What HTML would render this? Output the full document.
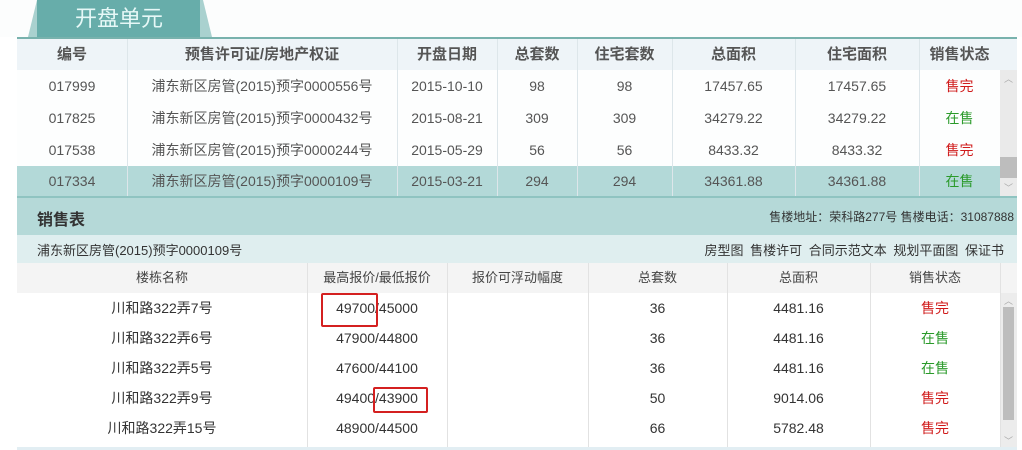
<!DOCTYPE html>
<html><head><meta charset="utf-8"><style>
body{margin:0;width:1022px;height:450px;background:#fff;position:relative;overflow:hidden;font-family:"Liberation Sans","Noto Sans CJK SC",sans-serif;}
.a{position:absolute;}
.c{position:absolute;text-align:center;white-space:nowrap;}
.vl{position:absolute;width:1px;}
</style></head><body>
<div class="a" style="left:0;top:0;width:1022px;height:37px;background:#fcfdfd"></div>
<div class="a" style="left:28px;top:0;width:184px;height:37px;background:#a9d1cf;clip-path:polygon(9px 0,175px 0,184px 37px,0 37px)"></div>
<div class="a" style="left:37px;top:0;width:163px;height:37px;background:#67adaa"></div>
<div class="a" style="left:75px;top:5px;font-size:22px;color:#e6f8f7;line-height:28px">开盘单元</div>
<div class="a" style="left:17px;top:37px;width:1000px;height:2px;background:#78b2ad"></div>
<div class="a" style="left:17px;top:39px;width:1000px;height:31px;background:#eef4f8"></div>
<div class="a" style="left:17px;top:70px;width:983px;height:96px;background:#fdfefe"></div>
<div class="a" style="left:17px;top:166px;width:983px;height:30px;background:#b3d9d8"></div>
<div class="a" style="left:17px;top:196px;width:1000px;height:2px;background:#8fc4c1"></div>
<div id="t1"></div>
<div class="a" style="left:1000px;top:70px;width:17px;height:126px;background:#eaeaea"></div>
<div class="a" style="left:1000px;top:157px;width:17px;height:21px;background:#bdbdbd"></div>
<div class="c" style="left:1000px;top:72px;width:17px;font-size:9px;color:#aaa">︿</div>
<div class="c" style="left:1000px;top:181px;width:17px;font-size:9px;color:#aaa">﹀</div>
<div class="a" style="left:17px;top:198px;width:1000px;height:37px;background:#b5d9d8"></div>
<div class="a" style="left:37px;top:206px;font-size:16px;font-weight:bold;color:#333">销售表</div>
<div class="a" style="right:8px;top:208px;font-size:12px;color:#333">售楼地址：荣科路277号 售楼电话：31087888</div>
<div class="a" style="left:17px;top:235px;width:1000px;height:28px;background:#dfeeef"></div>
<div class="a" style="left:37px;top:240px;font-size:13px;color:#333">浦东新区房管(2015)预字0000109号</div>
<div class="a" style="right:18px;top:240px;font-size:13px;color:#333;word-spacing:3px">房型图 售楼许可 合同示范文本 规划平面图 保证书</div>
<div class="a" style="left:17px;top:263px;width:1000px;height:30px;background:#f4f4f4"></div>
<div class="a" style="left:17px;top:293px;width:983px;height:154px;background:#fff"></div>
<div class="a" style="left:17px;top:447px;width:1000px;height:3px;background:#e2eef3"></div>
<div class="a" style="left:1000px;top:293px;width:17px;height:154px;background:#ececec"></div>
<div class="a" style="left:1003px;top:307px;width:11px;height:113px;background:#bdbdbd"></div>
<div class="c" style="left:1000px;top:294px;width:17px;font-size:9px;color:#aaa">︿</div>
<div class="c" style="left:1000px;top:434px;width:17px;font-size:9px;color:#aaa">﹀</div>
<div id="t2"></div>
<div class="a" style="left:321px;top:293px;width:53px;height:30px;border:2.5px solid #d42020;border-radius:2px"></div>
<div class="a" style="left:373px;top:387px;width:51px;height:22px;border:2.5px solid #d42020;border-radius:2px"></div>
<script>
function build(id,cols,rows,top,rh,hdr,hh,hstyle,rstyle,vtop,vbot,lc){
 let h='';
 for(let i=1;i<cols.length-1;i++)h+=`<div class="vl" style="left:${cols[i]}px;top:${vtop}px;height:${vbot-vtop}px;background:${lc}"></div>`;
 hdr.forEach((t,i)=>h+=`<div class="c" style="left:${cols[i]}px;width:${cols[i+1]-cols[i]}px;top:${top}px;line-height:${hh}px;${hstyle}">${t}</div>`);
 let y=top+hh;
 rows.forEach((r,j)=>{r.forEach((t,i)=>{let col='';if(t=='售完')col='color:#d01b1b;';if(t=='在售')col='color:#2a9a2a;';
  h+=`<div class="c" style="left:${cols[i]}px;width:${cols[i+1]-cols[i]}px;top:${y}px;line-height:${rh[j]}px;${rstyle}${col}">${t}</div>`});y+=rh[j];});
 document.getElementById(id).outerHTML=h;
}
build('t1',[17,127,397,497,577,672,795,919,1000],[
['017999','浦东新区房管(2015)预字0000556号','2015-10-10','98','98','17457.65','17457.65','售完'],
['017825','浦东新区房管(2015)预字0000432号','2015-08-21','309','309','34279.22','34279.22','在售'],
['017538','浦东新区房管(2015)预字0000244号','2015-05-29','56','56','8433.32','8433.32','售完'],
['017334','浦东新区房管(2015)预字0000109号','2015-03-21','294','294','34361.88','34361.88','在售']],
39,[32,32,32,30],['编号','预售许可证/房地产权证','开盘日期','总套数','住宅套数','总面积','住宅面积','销售状态'],31,
'font-size:15px;font-weight:bold;color:#555;','font-size:14px;color:#555;',39,196,'#dde6ea');
build('t2',[17,307,447,588,727,870,1000,1000],[
['川和路322弄7号','49700/45000','','36','4481.16','售完'],
['川和路322弄6号','47900/44800','','36','4481.16','在售'],
['川和路322弄5号','47600/44100','','36','4481.16','在售'],
['川和路322弄9号','49400/43900','','50','9014.06','售完'],
['川和路322弄15号','48900/44500','','66','5782.48','售完']],
263,[30,30,30,30,30],['楼栋名称','最高报价/最低报价','报价可浮动幅度','总套数','总面积','销售状态'],30,
'font-size:13px;color:#444;','font-size:14px;color:#333;',263,447,'#e2e2e2');
</script>
</body></html>
